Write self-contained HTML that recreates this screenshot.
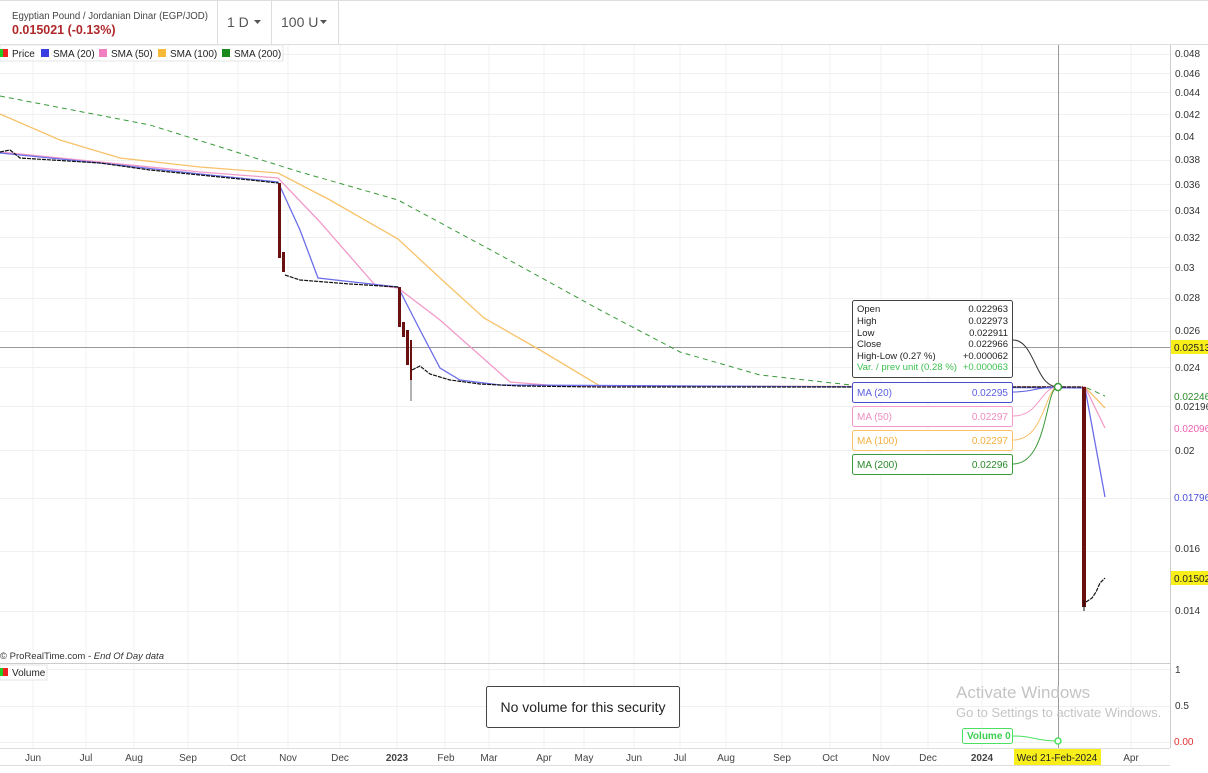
<!DOCTYPE html>
<html><head><meta charset="utf-8"><style>
body{margin:0;width:1208px;height:768px;overflow:hidden;background:#fff;font-family:"Liberation Sans",sans-serif;}
svg text{font-family:"Liberation Sans",sans-serif;}
</style></head><body>
<svg width="1208" height="768" viewBox="0 0 1208 768" xmlns="http://www.w3.org/2000/svg">
<rect x="0" y="0" width="1208" height="45" fill="#fff"/>
<line x1="0" y1="0.5" x2="1208" y2="0.5" stroke="#ddd"/>
<line x1="0" y1="44.5" x2="1208" y2="44.5" stroke="#ddd"/>
<line x1="217.5" y1="0" x2="217.5" y2="44" stroke="#ddd"/>
<line x1="271.5" y1="0" x2="271.5" y2="44" stroke="#ddd"/>
<line x1="338.5" y1="0" x2="338.5" y2="44" stroke="#ddd"/>
<text x="12" y="19" font-size="10.5" fill="#444" textLength="196" lengthAdjust="spacingAndGlyphs">Egyptian Pound / Jordanian Dinar (EGP/JOD)</text>
<text x="12" y="34" font-size="12.5" font-weight="bold" fill="#b0282a">0.015021 (-0.13%)</text>
<text x="227" y="27" font-size="14" fill="#555">1 D</text>
<path d="M254 20h7l-3.5 4z" fill="#555"/>
<text x="281" y="27" font-size="14" fill="#555">100 U</text>
<path d="M320 20h7l-3.5 4z" fill="#555"/>
<g stroke="#f0f0f0" stroke-width="1">
<line x1="0" y1="54.5" x2="1170" y2="54.5"/><line x1="0" y1="73.5" x2="1170" y2="73.5"/>
<line x1="0" y1="92.5" x2="1170" y2="92.5"/><line x1="0" y1="114.5" x2="1170" y2="114.5"/>
<line x1="0" y1="136.5" x2="1170" y2="136.5"/><line x1="0" y1="160.5" x2="1170" y2="160.5"/>
<line x1="0" y1="184.5" x2="1170" y2="184.5"/><line x1="0" y1="210.5" x2="1170" y2="210.5"/>
<line x1="0" y1="237.5" x2="1170" y2="237.5"/><line x1="0" y1="267.5" x2="1170" y2="267.5"/>
<line x1="0" y1="298.5" x2="1170" y2="298.5"/><line x1="0" y1="331.5" x2="1170" y2="331.5"/>
<line x1="0" y1="367.5" x2="1170" y2="367.5"/><line x1="0" y1="406.5" x2="1170" y2="406.5"/>
<line x1="0" y1="450.5" x2="1170" y2="450.5"/><line x1="0" y1="498.5" x2="1170" y2="498.5"/>
<line x1="0" y1="551.5" x2="1170" y2="551.5"/><line x1="0" y1="611.5" x2="1170" y2="611.5"/>
<line x1="0" y1="669.5" x2="1170" y2="669.5"/><line x1="0" y1="706.5" x2="1170" y2="706.5"/>
<line x1="0" y1="742.5" x2="1170" y2="742.5"/>
<line x1="33" y1="45" x2="33" y2="748"/><line x1="86" y1="45" x2="86" y2="748"/>
<line x1="134" y1="45" x2="134" y2="748"/><line x1="188" y1="45" x2="188" y2="748"/>
<line x1="238" y1="45" x2="238" y2="748"/><line x1="288" y1="45" x2="288" y2="748"/>
<line x1="340" y1="45" x2="340" y2="748"/><line x1="397" y1="45" x2="397" y2="748"/>
<line x1="445" y1="45" x2="445" y2="748"/><line x1="489" y1="45" x2="489" y2="748"/>
<line x1="544" y1="45" x2="544" y2="748"/><line x1="584" y1="45" x2="584" y2="748"/>
<line x1="634" y1="45" x2="634" y2="748"/><line x1="680" y1="45" x2="680" y2="748"/>
<line x1="726" y1="45" x2="726" y2="748"/><line x1="782" y1="45" x2="782" y2="748"/>
<line x1="830" y1="45" x2="830" y2="748"/><line x1="881" y1="45" x2="881" y2="748"/>
<line x1="928" y1="45" x2="928" y2="748"/><line x1="982" y1="45" x2="982" y2="748"/>
<line x1="1131" y1="45" x2="1131" y2="748"/>
</g>
<line x1="1170.5" y1="45" x2="1170.5" y2="748" stroke="#ccc"/>
<line x1="0" y1="663.5" x2="1170" y2="663.5" stroke="#ccc"/>
<line x1="0" y1="748.5" x2="1170" y2="748.5" stroke="#ddd"/>
<line x1="0" y1="347.5" x2="1170" y2="347.5" stroke="#999"/>
<line x1="1058.5" y1="45" x2="1058.5" y2="748" stroke="#999"/>
<polyline fill="none" stroke="#3a9a3a" stroke-width="1" stroke-dasharray="5,4" points="0,96 150,125 300,172 398,200 500,255 600,310 680,352 760,375 860,386 1085,387 1105,396"/>
<polyline fill="none" stroke="#f7c26a" stroke-width="1.3" points="0,114 60,140 120,158 200,167 278,173 330,200 398,239 440,278 484,318 540,350 600,386 1085,387 1105,408"/>
<polyline fill="none" stroke="#f29ac8" stroke-width="1.3" points="0,152 100,162 200,172 278,178 320,222 375,285 398,288 440,320 510,382 560,386 1085,387 1105,428"/>
<polyline fill="none" stroke="#6a6ee8" stroke-width="1.3" points="0,153 100,163 200,174 278,182 300,230 318,278 380,285 398,287 420,330 440,368 460,380 500,385 1085,388 1105,497"/>
<g fill="none" stroke="#111" stroke-width="1.2" stroke-dasharray="4,1">
<polyline points="0,152 10,150 20,158 100,163 150,170 200,175 250,180 278,183"/>
<polyline points="285,275 300,280 350,284 398,287"/>
<polyline points="412,370 420,366 430,374 450,380 480,384 520,386 600,387 1083,387"/>
<polyline points="1086,602 1092,598 1096,592 1100,583 1105,578"/>
</g>
<rect x="278" y="183" width="3" height="75" fill="#6a1010"/>
<rect x="282" y="252" width="3" height="20" fill="#6a1010"/>
<rect x="398" y="287" width="3" height="40" fill="#6a1010"/>
<rect x="402" y="322" width="3" height="15" fill="#6a1010"/>
<rect x="406" y="330" width="3" height="35" fill="#6a1010"/>
<rect x="410" y="340" width="2" height="40" fill="#6a1010"/>
<line x1="411" y1="380" x2="411" y2="401" stroke="#666"/>
<rect x="1082" y="387" width="4" height="220" fill="#6a1010"/>
<line x1="1084" y1="600" x2="1084" y2="611" stroke="#111"/>
<path d="M1013 340 C1035 340,1035 387,1058 387" fill="none" stroke="#333"/>
<path d="M1013 392 C1035 392,1035 387,1058 387" fill="none" stroke="#5a5ee0"/>
<path d="M1013 416 C1040 416,1040 387,1058 387" fill="none" stroke="#f29ac8"/>
<path d="M1013 440 C1045 440,1045 387,1058 387" fill="none" stroke="#f7c26a"/>
<path d="M1013 464 C1048 464,1045 387,1058 387" fill="none" stroke="#3a9a3a"/>
<circle cx="1058" cy="387" r="3.5" fill="#fff" stroke="#3a9a3a" stroke-width="1.5"/>
<rect x="852.5" y="300.5" width="160" height="77" rx="2" fill="#fff" stroke="#444"/>
<g font-size="9.5" fill="#222">
<text x="857" y="312">Open</text><text x="1008" y="312" text-anchor="end">0.022963</text>
<text x="857" y="324">High</text><text x="1008" y="324" text-anchor="end">0.022973</text>
<text x="857" y="336">Low</text><text x="1008" y="336" text-anchor="end">0.022911</text>
<text x="857" y="347">Close</text><text x="1008" y="347" text-anchor="end">0.022966</text>
<text x="857" y="359">High-Low (0.27 %)</text><text x="1008" y="359" text-anchor="end">+0.000062</text>
<text x="857" y="370" fill="#3cc050" textLength="100" lengthAdjust="spacingAndGlyphs">Var. / prev unit (0.28 %)</text><text x="1008" y="370" text-anchor="end" fill="#3cc050">+0.000063</text>
</g>
<g font-size="10">
<rect x="852.5" y="382.5" width="160" height="20" rx="2" fill="#fff" stroke="#4a4ec8"/>
<text x="857" y="396" fill="#5a5ee0">MA (20)</text><text x="1008" y="396" text-anchor="end" fill="#5a5ee0">0.02295</text>
<rect x="852.5" y="406.5" width="160" height="20" rx="2" fill="#fff" stroke="#f29ac8"/>
<text x="857" y="420" fill="#f08cc0">MA (50)</text><text x="1008" y="420" text-anchor="end" fill="#f08cc0">0.02297</text>
<rect x="852.5" y="430.5" width="160" height="20" rx="2" fill="#fff" stroke="#f7c26a"/>
<text x="857" y="444" fill="#f5b040">MA (100)</text><text x="1008" y="444" text-anchor="end" fill="#f5b040">0.02297</text>
<rect x="852.5" y="454.5" width="160" height="20" rx="2" fill="#fff" stroke="#3a9a3a"/>
<text x="857" y="468" fill="#2a8a2a">MA (200)</text><text x="1008" y="468" text-anchor="end" fill="#2a8a2a">0.02296</text>
</g>
<g font-size="10" fill="#222">
<rect x="0" y="45" width="283" height="16" fill="#fff" stroke="#e5e5e5"/>
<rect x="0" y="49" width="3" height="8" fill="#2c2"/><rect x="3" y="49" width="5" height="8" fill="#e22"/>
<text x="12" y="57">Price</text>
<rect x="41" y="49" width="8" height="8" fill="#3a3ee0"/><text x="53" y="57">SMA (20)</text>
<rect x="99" y="49" width="8" height="8" fill="#f080c0"/><text x="111" y="57">SMA (50)</text>
<rect x="158" y="49" width="8" height="8" fill="#f7b93a"/><text x="170" y="57">SMA (100)</text>
<rect x="222" y="49" width="8" height="8" fill="#1a8a1a"/><text x="234" y="57">SMA (200)</text>
</g>
<text x="0" y="659" font-size="9.5" fill="#333">© ProRealTime.com  -  <tspan font-style="italic">End Of Day data</tspan></text>
<rect x="0" y="665" width="47" height="15" fill="#fff" stroke="#e5e5e5"/>
<rect x="0" y="668" width="3" height="8" fill="#2c2"/><rect x="3" y="668" width="5" height="8" fill="#e22"/>
<text x="12" y="676" font-size="10" fill="#222">Volume</text>
<rect x="486.5" y="686.5" width="193" height="41" rx="2" fill="#fff" stroke="#444"/>
<text x="583" y="712" font-size="14" fill="#222" text-anchor="middle">No volume for this security</text>
<rect x="962.5" y="728.5" width="50" height="15" rx="2" fill="#fff" stroke="#4ce060"/>
<text x="967" y="739" font-size="10" font-weight="bold" fill="#3cd050">Volume  0</text>
<path d="M1013 736 C1035 736,1035 741,1058 741" fill="none" stroke="#4ce060"/>
<circle cx="1058" cy="741" r="3" fill="#fff" stroke="#4ce060" stroke-width="1.5"/>
<text x="956" y="698" font-size="17" fill="#c4c4c4">Activate Windows</text>
<text x="956" y="717" font-size="13" fill="#c4c4c4">Go to Settings to activate Windows.</text>
<g font-size="10" fill="#333">
<text x="1175" y="57">0.048</text><text x="1175" y="77">0.046</text><text x="1175" y="96">0.044</text>
<text x="1175" y="118">0.042</text><text x="1175" y="140">0.04</text><text x="1175" y="163">0.038</text>
<text x="1175" y="188">0.036</text><text x="1175" y="214">0.034</text><text x="1175" y="241">0.032</text>
<text x="1175" y="271">0.03</text><text x="1175" y="301">0.028</text><text x="1175" y="334">0.026</text>
<text x="1175" y="371">0.024</text><text x="1175" y="410">0.02196</text><text x="1175" y="454">0.02</text>
<text x="1175" y="552">0.016</text><text x="1175" y="614">0.014</text>
<text x="1175" y="673">1</text><text x="1175" y="709">0.5</text>
</g>
<rect x="1171" y="340" width="37" height="14" fill="#f7ee1a"/>
<text x="1174" y="351" font-size="10" fill="#222">0.02513</text>
<rect x="1171" y="390" width="37" height="13" fill="#fff"/>
<text x="1174" y="400" font-size="10" fill="#2a8a2a">0.02246</text>
<text x="1174" y="432" font-size="10" fill="#f060b0">0.02096</text>
<text x="1174" y="501" font-size="10" fill="#4a4ed8">0.01796</text>
<rect x="1171" y="571" width="37" height="14" fill="#f7ee1a"/>
<text x="1174" y="582" font-size="10" fill="#222">0.01502</text>
<text x="1174" y="745" font-size="10" fill="#e03030">0.00</text>
<g font-size="10" fill="#444" text-anchor="middle">
<text x="33" y="761">Jun</text><text x="86" y="761">Jul</text><text x="134" y="761">Aug</text>
<text x="188" y="761">Sep</text><text x="238" y="761">Oct</text><text x="288" y="761">Nov</text>
<text x="340" y="761">Dec</text><text x="397" y="761" font-weight="bold">2023</text><text x="446" y="761">Feb</text>
<text x="489" y="761">Mar</text><text x="544" y="761">Apr</text><text x="584" y="761">May</text>
<text x="634" y="761">Jun</text><text x="680" y="761">Jul</text><text x="726" y="761">Aug</text>
<text x="782" y="761">Sep</text><text x="830" y="761">Oct</text><text x="881" y="761">Nov</text>
<text x="928" y="761">Dec</text><text x="982" y="761" font-weight="bold">2024</text>
<text x="1131" y="761">Apr</text>
</g>
<rect x="1014" y="749" width="87" height="16" fill="#f7ee1a"/>
<text x="1057" y="761" font-size="10" fill="#222" text-anchor="middle">Wed 21-Feb-2024</text>
<line x1="0" y1="765.5" x2="1170" y2="765.5" stroke="#ddd"/>
</svg>
</body></html>
